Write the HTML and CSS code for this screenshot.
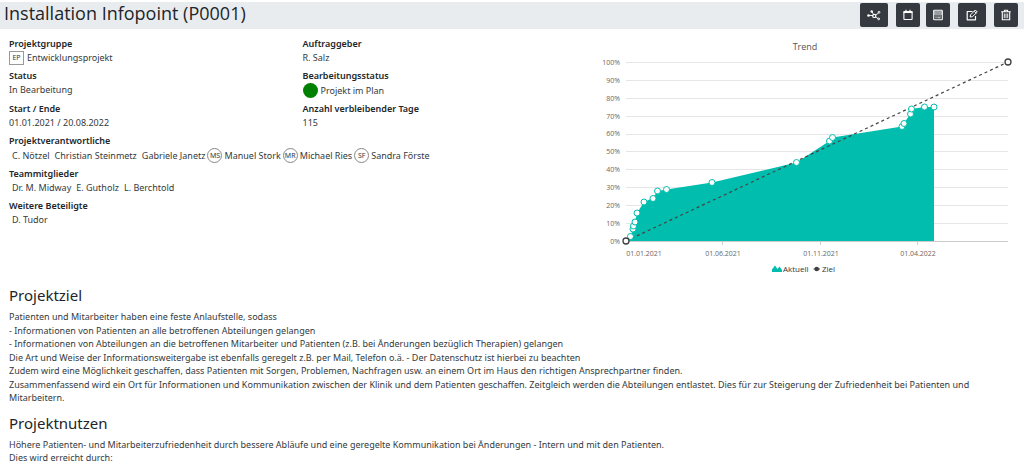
FILE: index.html
```
<!DOCTYPE html>
<html lang="de">
<head>
<meta charset="utf-8">
<title>Installation Infopoint (P0001)</title>
<link rel="stylesheet" href="styles.css">
</head>
<body>
<header class="page-header">
  <h1 class="page-title">Installation Infopoint (P0001)</h1>
  <div class="toolbar">
    <button class="tool tool-wide" type="button" aria-label="Netzwerk">
      <svg class="icon icon-wide" viewBox="0 0 14 12"><g fill="none" stroke="currentColor"><path d="M2 6.500 6 6.500M5 2.500 6.500 5.500M8.700 6 11.500 4M8.500 8 11 9.500" stroke-width=".9"/><circle cx="7.300" cy="6.900" r="1.600" stroke-width="1.200"/><circle cx="12" cy="3.300" r=".9"/><circle cx="11.700" cy="9.900" r=".9"/></g><g fill="currentColor"><circle cx="1.500" cy="6.500" r="1.300"/><circle cx="4.700" cy="2.500" r="1.200"/></g></svg>
    </button>
    <div class="tool-pair">
      <button class="tool" type="button" aria-label="Kalender">
        <svg class="icon" viewBox="0 0 12 12"><g fill="none" stroke="currentColor"><rect x="1.900" y="2.500" width="8.200" height="8" rx=".6" stroke-width="1.100"/><path d="M1.500 3.300h9" stroke-width="1.500"/><path d="M4 .8v2M8 .8v2" stroke-width="1.200"/></g></svg>
      </button>
      <button class="tool" type="button" aria-label="Rechner">
        <svg class="icon" viewBox="0 0 12 12"><g fill="none" stroke="currentColor"><rect x="1.700" y="1.200" width="8.600" height="9.600" rx=".6" stroke-width="1.100"/><path d="M2 3h8M2 5h8"/><path d="M3.400 7h1.300M5.400 7h1.300M7.400 7h1.300M3.400 8.800h1.300M5.400 8.800h3.300" stroke-width=".9"/></g></svg>
      </button>
    </div>
    <button class="tool tool-wide" type="button" aria-label="Bearbeiten">
      <svg class="icon" viewBox="0 0 12 12"><g fill="none" stroke="currentColor" stroke-linejoin="round"><path d="M6.500 2.500H1.200v8.300h8.300V7" stroke-width="1.200"/><path d="M4.100 8 4.600 5.800 9.300 1 11.300 3 6.400 7.700ZM8.100 2.200l2 2" stroke-width="1"/></g></svg>
    </button>
    <button class="tool" type="button" aria-label="Löschen">
      <svg class="icon" viewBox="0 0 12 12"><g fill="none" stroke="currentColor"><path d="M1.200 2.800h9.600M4 2.700 4.600 1.300h2.800L8 2.700M2.300 2.800v7.900h7.400V2.800" stroke-width="1.100"/><path d="M4.300 4.500v4.700M6 4.500v4.700M7.700 4.500v4.700" stroke-width=".9"/></g></svg>
    </button>
  </div>
</header>

<main class="content">
  <section class="overview">
    <dl class="facts">
      <div class="fact"><dt>Projektgruppe</dt><dd><span class="tag">EP</span> Entwicklungsprojekt</dd></div>
      <div class="fact"><dt>Auftraggeber</dt><dd>R. Salz</dd></div>
      <div class="fact"><dt>Status</dt><dd>In Bearbeitung</dd></div>
      <div class="fact"><dt>Bearbeitungsstatus</dt><dd class="tall"><span class="dot"></span> Projekt im Plan</dd></div>
      <div class="fact"><dt>Start / Ende</dt><dd>01.01.2021 / 20.08.2022</dd></div>
      <div class="fact"><dt>Anzahl verbleibender Tage</dt><dd>115</dd></div>
      <div class="fact fact-full"><dt>Projektverantwortliche</dt><dd class="people tall"><span class="person">C. Nötzel</span><span class="person">Christian Steinmetz</span><span class="person">Gabriele Janetz</span><span class="avatar">MS</span><span>Manuel Stork</span><span class="avatar">MR</span><span>Michael Ries</span><span class="avatar">SF</span><span>Sandra Förste</span></dd></div>
      <div class="fact fact-full"><dt>Teammitglieder</dt><dd class="people"><span class="person">Dr. M. Midway</span><span class="person">E. Gutholz</span><span class="person">L. Berchtold</span></dd></div>
      <div class="fact fact-full"><dt>Weitere Beteiligte</dt><dd class="people"><span class="person">D. Tudor</span></dd></div>
    </dl>
    <svg class="chart" viewBox="590 36 434 244" role="img" aria-label="Trend">
      <text class="chart-title" x="805" y="50">Trend</text>
      <path class="grid-line" d="M626 62.500h382M626 80.500h382M626 98.500h382M626 116.500h382M626 134.500h382M626 151.500h382M626 169.500h382M626 187.500h382M626 205.500h382M626 223.500h382"/>
      <path class="axis-line" d="M626 241.500h382M722.500 241v4M820.500 241v4M917.500 241v4"/>
      <g class="y-label">
        <text x="620" y="65">100%</text><text x="620" y="83">90%</text><text x="620" y="101">80%</text><text x="620" y="119">70%</text><text x="620" y="136">60%</text><text x="620" y="154">50%</text><text x="620" y="172">40%</text><text x="620" y="190">30%</text><text x="620" y="208">20%</text><text x="620" y="226">10%</text><text x="620" y="244">0%</text>
      </g>
      <g class="x-label">
        <text x="644" y="256">01.01.2021</text><text x="723" y="256">01.06.2021</text><text x="821" y="256">01.11.2021</text><text x="918" y="256">01.04.2022</text>
      </g>
      <path class="area" d="M626 241 630.500 236 633 229 633.500 225 635 222 637 213 644 202 653 198 657.500 191 666.500 189.500 712 182.500 796.500 162.500 829.500 141 832.500 137.500 902 126.500 904 123 910.500 114 911.500 109 924.500 107 934 107V241Z"/>
      <path class="target" d="M626 241 1008 62"/>
      <g class="points">
        <circle cx="630.500" cy="236.500" r="3"/><circle cx="633" cy="229" r="3"/><circle cx="633.500" cy="226" r="3"/><circle cx="635" cy="222" r="3"/><circle cx="637" cy="213" r="3"/><circle cx="644" cy="202" r="3"/><circle cx="653" cy="198.500" r="3"/><circle cx="657.500" cy="191" r="3"/><circle cx="666.500" cy="189.500" r="3"/><circle cx="712" cy="182.500" r="3"/><circle cx="796.500" cy="162.500" r="3"/><circle cx="829.500" cy="141" r="3"/><circle cx="832.500" cy="137.500" r="3"/><circle cx="902" cy="126.500" r="3"/><circle cx="904" cy="123.500" r="3"/><circle cx="910.500" cy="114" r="3"/><circle cx="911.500" cy="109" r="3"/><circle cx="924.500" cy="107" r="3"/><circle cx="934" cy="107" r="3"/>
      </g>
      <g class="target-points"><circle cx="626" cy="241" r="3"/><circle cx="1008" cy="62" r="3"/></g>
      <path class="area" d="M772 272V269.500L775 265.500 777.500 269 779.500 266.500 782 270V272Z"/>
      <text class="legend" x="783" y="272">Aktuell</text>
      <path class="legend-mark" d="M813.500 269h6.500"/><circle class="legend-dot" cx="816.700" cy="269" r="2.300"/>
      <text class="legend" x="822" y="272">Ziel</text>
    </svg>
  </section>

  <section class="prose">
    <h2>Projektziel</h2>
    <p>Patienten und Mitarbeiter haben eine feste Anlaufstelle, sodass<br>
    - Informationen von Patienten an alle betroffenen Abteilungen gelangen<br>
    - Informationen von Abteilungen an die betroffenen Mitarbeiter und Patienten (z.B. bei Änderungen bezüglich Therapien) gelangen<br>
    Die Art und Weise der Informationsweitergabe ist ebenfalls geregelt z.B. per Mail, Telefon o.ä. - Der Datenschutz ist hierbei zu beachten<br>
    Zudem wird eine Möglichkeit geschaffen, dass Patienten mit Sorgen, Problemen, Nachfragen usw. an einem Ort im Haus den richtigen Ansprechpartner finden.<br>
    Zusammenfassend wird ein Ort für Informationen und Kommunikation zwischen der Klinik und dem Patienten geschaffen. Zeitgleich werden die Abteilungen entlastet. Dies für zur Steigerung der Zufriedenheit bei Patienten und Mitarbeitern.</p>
  </section>
  <section class="prose">
    <h2>Projektnutzen</h2>
    <p>Höhere Patienten- und Mitarbeiterzufriedenheit durch bessere Abläufe und eine geregelte Kommunikation bei Änderungen - Intern und mit den Patienten.<br>
    Dies wird erreicht durch:</p>
  </section>
</main>
</body>
</html>
```

FILE: styles.css
```
* { box-sizing: border-box; }

body {
  margin: 0;
  padding-top: 2px;
  background: #fff;
  color: #343a40;
  font: 9px/1.5 "Noto Sans", "Open Sans", sans-serif;
}

.page-header {
  display: flex;
  justify-content: space-between;
  align-items: flex-start;
  height: 27px;
  padding: 0 6px 0 4px;
  background: #e9ecef;
}

.page-title {
  margin: 0;
  font-family: "Open Sans", "Noto Sans", sans-serif;
  font-size: 18px;
  line-height: 22px;
  font-weight: 400;
  color: #212529;
}

.toolbar {
  display: flex;
  gap: 8px;
  padding-top: 1px;
}

.tool-pair { display: flex; gap: 6px; }

.tool {
  display: flex;
  align-items: center;
  justify-content: center;
  width: 24px;
  height: 24px;
  padding: 0;
  border: 0;
  border-radius: 2px;
  background: #343a40;
  color: #fff;
}

.tool-wide { width: 28px; }
.icon { width: 12px; height: 12px; }
.icon-wide { width: 14px; }

.content { padding: 0 0 0 9px; }

.overview {
  display: grid;
  grid-template-columns: 581fr 434fr;
  align-items: start;
  padding-top: 7px;
}

.facts {
  display: grid;
  grid-template-columns: 1fr 1fr;
  column-gap: 6px;
  row-gap: 4px;
  margin: 0;
  padding-top: 1px;
}

.fact-full { grid-column: 1 / -1; }
dt { font-weight: 600; color: #212529; line-height: 14px; }

dd {
  display: flex;
  align-items: center;
  gap: 3px;
  height: 14px;
  margin: 0;
}

.tall { height: 15px; }
.people { gap: 2px; }

.tag {
  width: 15px;
  border: 1px solid #999;
  font-size: 7px;
  line-height: 12px;
  text-align: center;
}

.dot {
  width: 15px;
  height: 15px;
  border-radius: 50%;
  background: #008000;
}

.person { padding-left: 3px; }

.avatar {
  display: flex;
  align-items: center;
  justify-content: center;
  width: 15px;
  height: 15px;
  border: 1px solid #888;
  border-radius: 50%;
  font-size: 7px;
  line-height: 13px;
}

.chart {
  display: block;
  width: 100%;
  font-family: "Open Sans", "Noto Sans", sans-serif;
}

.chart-title { font-size: 9px; text-anchor: middle; fill: #555; }
.grid-line { stroke: #e6e6e6; }
.axis-line { stroke: #ccc; }
.y-label { font-size: 7px; text-anchor: end; fill: #686868; }
.x-label { font-size: 7px; text-anchor: middle; fill: #686868; }
.area { fill: #01bdae; }
.target { stroke: #444; stroke-width: 1.2; stroke-dasharray: 3 3; }
.points { fill: #fff; stroke: #01bdae; }
.target-points { fill: #fff; stroke: #404041; stroke-width: 1.3; }
.legend { font-size: 8px; fill: #353535; }
.legend-mark { stroke: #404041; }
.legend-dot { fill: #404041; }

.prose h2 {
  margin: 0 0 4px;
  padding-top: 4px;
  color: #212529;
  font-size: 15px;
  line-height: 22px;
  font-weight: 400;
}

.prose p { margin: 0 0 3px; }
```
